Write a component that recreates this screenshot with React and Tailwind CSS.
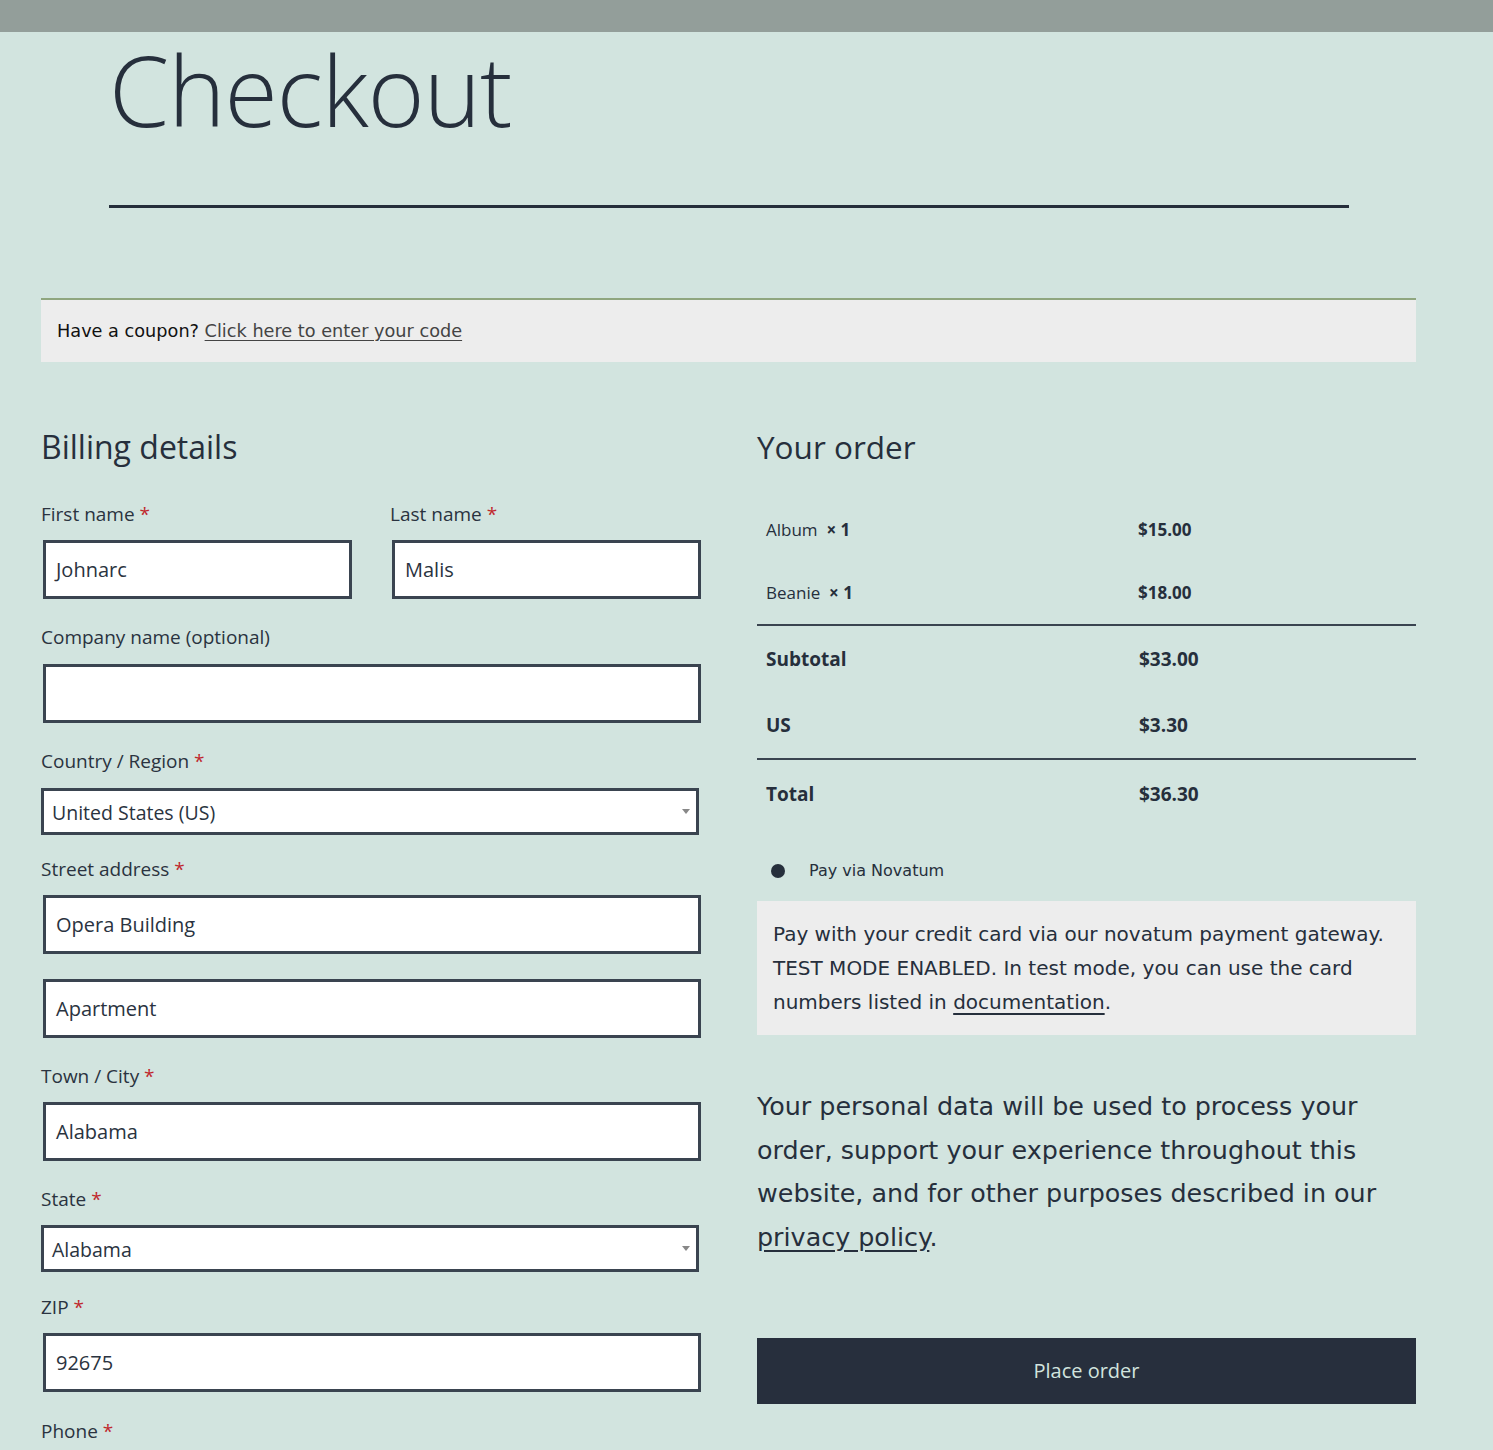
const ubuntu = "font-['Open_Sans','Noto_Sans',sans-serif]";
const dejavu = "font-['DejaVu_Sans',sans-serif]";

function Label({ children, required }) {
  return (
    <label className={`block text-[19px] leading-[26px] text-[#2a3340] ${ubuntu}`}>
      {children}
      {required && <span className="text-[#c0282d]"> *</span>}
    </label>
  );
}

function TextField({ value }) {
  return (
    <div className="ml-[2px] h-[59px] border-[3px] border-[#3a4450] bg-white px-[10px] flex items-center">
      <span className={`text-[20px] text-[#2a3340] ${ubuntu}`}>{value}</span>
    </div>
  );
}

function SelectField({ value }) {
  return (
    <div className="mr-[2px] h-[47px] border-[3px] border-[#3a4450] bg-white pl-[8px] pr-[6px] flex items-center justify-between">
      <span className={`text-[19.5px] text-[#2a3340] pt-[3px] ${ubuntu}`}>{value}</span>
      <span className="w-0 h-0 border-l-[4px] border-r-[4px] border-t-[5px] border-l-transparent border-r-transparent border-t-[#888]" />
    </div>
  );
}

const orderItems = [
  { name: 'Album', qty: 1, price: '$15.00' },
  { name: 'Beanie', qty: 1, price: '$18.00' },
];

export default function App() {
  return (
    <div className="min-h-screen bg-[#d2e4df] text-[#262f3c]">
      <div className="h-8 bg-[#939e9a]" />

      {/* Page title */}
      <div className="pl-[109px] w-[1349px]">
        <h1 className={`text-[97px] font-light leading-[1] pt-[9px] text-[#262f3c] tracking-[-1px] ${ubuntu}`}>
          Checkout
        </h1>
        <div className="mt-[67px] h-[3px] bg-[#252e3b]" />
      </div>

      <div className="pl-[41px] pt-[90px]">
        <div className="w-[1375px]">
          {/* Coupon notice */}
          <div className={`border-t-2 border-[#8fa67f] bg-[#ededed] h-[64px] flex items-center px-[16px] text-[17.7px] text-[#111] ${dejavu}`}>
            <span>Have a coupon?&nbsp;</span>
            <a className="text-[#444] underline underline-offset-[3px]">Click here to enter your code</a>
          </div>

          <div className="mt-[65px] grid grid-cols-[660px_659px] gap-x-[56px]">
            {/* Billing */}
            <div>
              <h3 className={`text-[32px] leading-[40px] text-[#262f3c] ${ubuntu}`}>Billing details</h3>

              <div className="mt-[34px] grid grid-cols-2 gap-x-[38px]">
                <div>
                  <Label required>First name</Label>
                  <div className="mt-[13px]"><TextField value="Johnarc" /></div>
                </div>
                <div>
                  <Label required>Last name</Label>
                  <div className="mt-[13px]"><TextField value="Malis" /></div>
                </div>
              </div>

              <div className="mt-[25px]">
                <Label>Company name (optional)</Label>
                <div className="mt-[14px]"><TextField value="" /></div>
              </div>

              <div className="mt-[25px]">
                <Label required>Country / Region</Label>
                <div className="mt-[14px]"><SelectField value="United States (US)" /></div>
              </div>

              <div className="mt-[21px]">
                <Label required>Street address</Label>
                <div className="mt-[13px]"><TextField value="Opera Building" /></div>
                <div className="mt-[25px]"><TextField value="Apartment" /></div>
              </div>

              <div className="mt-[25px]">
                <Label required>Town / City</Label>
                <div className="mt-[13px]"><TextField value="Alabama" /></div>
              </div>

              <div className="mt-[25px]">
                <Label required>State</Label>
                <div className="mt-[13px]"><SelectField value="Alabama" /></div>
              </div>

              <div className="mt-[22px]">
                <Label required>ZIP</Label>
                <div className="mt-[13px]"><TextField value="92675" /></div>
              </div>

              <div className="mt-[26px]">
                <Label required>Phone</Label>
              </div>
            </div>

            {/* Order review */}
            <div>
              <h3 className={`text-[31.5px] leading-[40px] text-[#262f3c] ${ubuntu}`}>Your order</h3>

              <div className={`mt-[31px] text-[#262f3c] ${ubuntu}`}>
                {orderItems.map((item) => (
                  <div key={item.name} className="grid grid-cols-[372px_1fr] h-[63px] items-center pl-[9px] text-[17px]">
                    <span>
                      {item.name}&nbsp; <b className="font-bold">× {item.qty}</b>
                    </span>
                    <span className="font-bold">{item.price}</span>
                  </div>
                ))}
                <div className="h-[2px] bg-[#3a4450]" />
                <div className="grid grid-cols-[372px_1fr] h-[66px] items-center pl-[9px] font-bold text-[19px]">
                  <span>Subtotal</span>
                  <span className="pl-[1px]">$33.00</span>
                </div>
                <div className="grid grid-cols-[372px_1fr] h-[66px] items-center pl-[9px] font-bold text-[19px]">
                  <span>US</span>
                  <span className="pl-[1px]">$3.30</span>
                </div>
                <div className="h-[2px] bg-[#3a4450]" />
                <div className="grid grid-cols-[372px_1fr] h-[68px] items-center pl-[9px] font-bold text-[19px]">
                  <span>Total</span>
                  <span className="pl-[1px]">$36.30</span>
                </div>
              </div>

              <div className={`mt-[28px] flex items-center h-[30px] pl-[14px] text-[16px] text-[#262f3c] ${dejavu}`}>
                <span className="w-[14px] h-[14px] rounded-full bg-[#262f3c]" />
                <span className="ml-[24px]">Pay via Novatum</span>
              </div>

              <div className={`mt-[15px] bg-[#ededed] px-[16px] py-[16px] text-[20px] leading-[34px] text-[#262f3c] ${dejavu}`}>
                Pay with your credit card via our novatum payment gateway. TEST MODE ENABLED. In test mode, you can use the card numbers listed in{' '}
                <a className="underline underline-offset-[4px]">documentation</a>.
              </div>

              <p className={`mt-[50px] text-[25.4px] leading-[43.5px] text-[#262f3c] ${dejavu}`}>
                Your personal data will be used to process your order, support your experience throughout this website, and for other purposes described in our{' '}
                <a className="underline underline-offset-[4px]">privacy policy</a>.
              </p>

              <button className={`mt-[79px] w-full h-[66px] bg-[#272f3d] text-[#d2e4df] text-[20px] ${ubuntu}`}>
                Place order
              </button>
            </div>
          </div>
        </div>
      </div>
    </div>
  );
}
